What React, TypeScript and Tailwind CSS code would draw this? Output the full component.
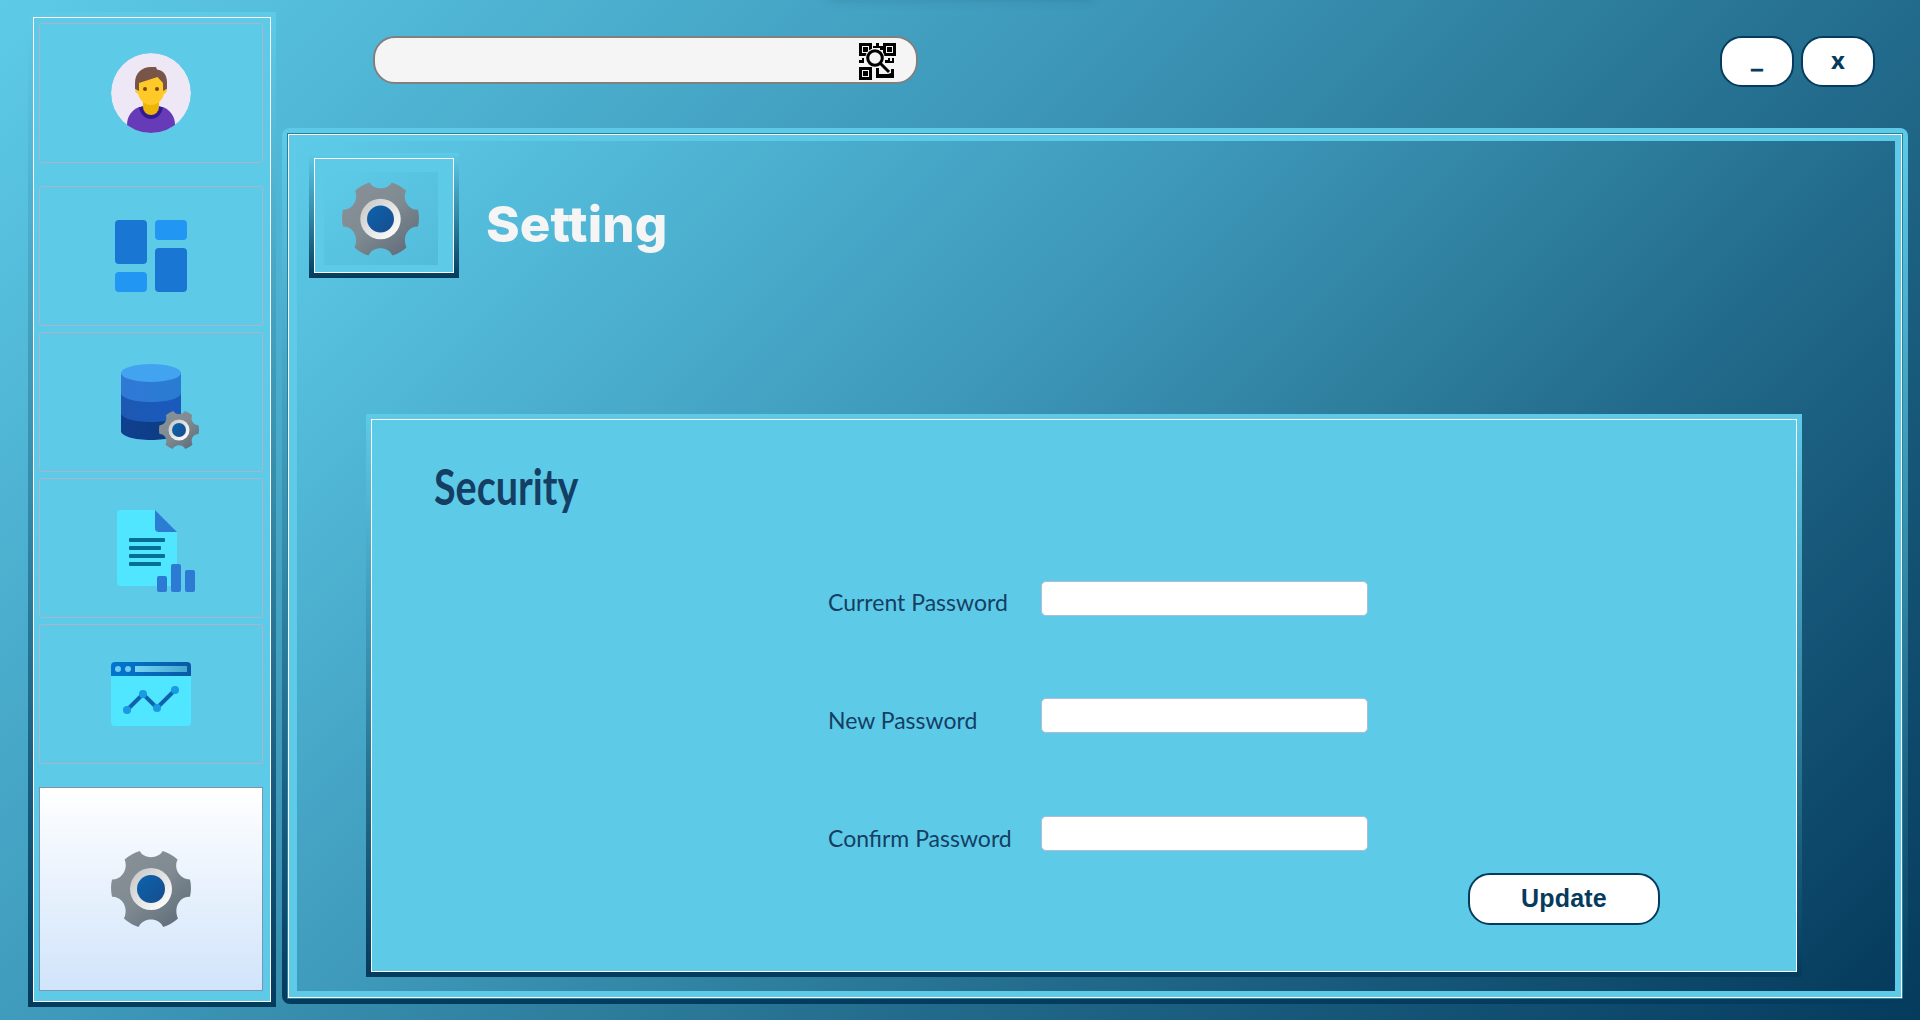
import React from "react";

function Gear({ className, id }: { className?: string; id: string }) {
  return (
    <svg viewBox="0 0 80 76" className={className}>
      <defs>
        <linearGradient id={id + "a"} x1="0.15" y1="0.1" x2="0.85" y2="0.9">
          <stop offset="0" stopColor="#889097" />
          <stop offset="0.5" stopColor="#7f8a91" />
          <stop offset="1" stopColor="#63707c" />
        </linearGradient>
        <linearGradient id={id + "b"} x1="0.15" y1="0.15" x2="0.85" y2="0.85">
          <stop offset="0" stopColor="#cdcdcd" />
          <stop offset="1" stopColor="#fafafa" />
        </linearGradient>
        <linearGradient id={id + "c"} x1="0.1" y1="0.1" x2="0.9" y2="0.9">
          <stop offset="0" stopColor="#0d61a9" />
          <stop offset="1" stopColor="#164f90" />
        </linearGradient>
      </defs>
      <path
        fill={`url(#${id}a)`}
        d="M28.8 0 C32.5 8.2 47.5 8.2 51.6 0 A40 40 0 0 1 66.6 8.6 C62 17.5 69 28.8 79 28.4 A40 40 0 0 1 79 45.8 C69 45.4 62 56 67 67.5 A40 40 0 0 1 52.2 76 C48 66 32 66 27.6 76 A40 40 0 0 1 13 67.5 C18 56.5 11 45.4 1 45.8 A40 40 0 0 1 1 28.4 C11 28.8 17.5 17.5 13.6 8.6 A40 40 0 0 1 28.8 0Z"
      />
      <circle cx="40" cy="38" r="21" fill={`url(#${id}b)`} />
      <circle cx="40" cy="38" r="14" fill={`url(#${id}c)`} />
    </svg>
  );
}

function Avatar() {
  return (
    <svg viewBox="0 0 80 80" className="size-20">
      <defs>
        <clipPath id="face"><circle cx="40" cy="40" r="40" /></clipPath>
      </defs>
      <g clipPath="url(#face)">
        <circle cx="40" cy="40" r="40" fill="#ede7f6" />
        <path fill="#673ab7" d="M16 80 V72 C16 63 21 57 28 54 H52 C59 57 64 63 64 72 V80Z" />
        <path fill="#311b92" d="M28 54.5 C34 51 46 51 52 54.5 C50 62 46 66 40 66 S30 62 28 54.5Z" />
        <path fill="#edb508" d="M32 48 H48 V54 A8 8 0 0 1 32 54Z" />
        <path fill="#ffca28" d="M28 24 L46 20 L52 28 V37 H56 C56 39 54.5 40 53 41 C51 48 46 52 40 52 S29 48 27 41 C25.5 40 24 39 24 37 H28Z" />
        <path fill="#795548" d="M24 36 V30 C24 20 31 14 40 14 H45 L46 16.5 C52 17 56 22 56 29 V36 L52 38 V30 L46.5 24 L28 30 V38Z" />
        <circle cx="34" cy="36" r="2" fill="#784719" />
        <circle cx="46" cy="36" r="2" fill="#784719" />
      </g>
    </svg>
  );
}

function Dashboard() {
  return (
    <svg viewBox="0 0 72 72" className="size-[72px]">
      <rect width="32" height="44" rx="4" fill="#1976d2" />
      <rect x="40" width="32" height="20" rx="4" fill="#2196f3" />
      <rect y="52" width="32" height="20" rx="4" fill="#2196f3" />
      <rect x="40" y="28" width="32" height="44" rx="4" fill="#1976d2" />
    </svg>
  );
}

function Database() {
  return (
    <div className="relative h-[86px] w-[78px]">
      <svg viewBox="0 0 60 76" className="h-[76px] w-[60px]">
        <defs>
          <linearGradient id="db1"><stop offset="0" stopColor="#3079d6" /><stop offset="1" stopColor="#297cd2" /></linearGradient>
          <linearGradient id="db2"><stop offset="0" stopColor="#1d59b3" /><stop offset="1" stopColor="#195abd" /></linearGradient>
          <linearGradient id="db3"><stop offset="0" stopColor="#103f8f" /><stop offset="1" stopColor="#0d3c82" /></linearGradient>
        </defs>
        <path fill="url(#db3)" d="M0 46 V67 C0 72 13 76 30 76 S60 72 60 67 V46Z" />
        <path fill="url(#db2)" d="M0 26 V49 C0 54 13 58 30 58 S60 54 60 49 V26Z" />
        <path fill="url(#db1)" d="M0 9 V29 C0 34 13 38 30 38 S60 34 60 29 V9Z" />
        <ellipse cx="30" cy="9" rx="30" ry="9" fill="#42a3f0" />
      </svg>
      <Gear id="dbg" className="absolute top-[47px] left-[38px] h-[38px] w-10" />
    </div>
  );
}

function Report() {
  return (
    <svg viewBox="0 0 78 82" className="h-[82px] w-[78px]">
      <path fill="#50e6ff" d="M4 0 H38 L60 22 V76 H4 A4 4 0 0 1 0 72 V4 A4 4 0 0 1 4 0Z" />
      <path fill="#2b7cd3" d="M38 0 L60 22 H42 A4 4 0 0 1 38 18Z" />
      <g fill="#057093">
        <rect x="12" y="28" width="36" height="4" rx="1" />
        <rect x="12" y="36" width="32" height="4" rx="1" />
        <rect x="12" y="44" width="36" height="4" rx="1" />
        <rect x="12" y="52" width="32" height="4" rx="1" />
      </g>
      <g fill="#2c7ad4">
        <rect x="40" y="66" width="10" height="16" rx="2" />
        <rect x="54" y="54" width="10" height="28" rx="2" />
        <rect x="68" y="60" width="10" height="22" rx="2" />
      </g>
    </svg>
  );
}

function Analytics() {
  return (
    <svg viewBox="0 0 80 64" className="h-16 w-20">
      <defs>
        <linearGradient id="bar"><stop offset="0" stopColor="#0077d2" /><stop offset="1" stopColor="#0b59a4" /></linearGradient>
        <linearGradient id="adr"><stop offset="0" stopColor="#76d3f2" /><stop offset="1" stopColor="#42a9cf" /></linearGradient>
      </defs>
      <path fill="#50e6ff" d="M0 14 H80 V60 A4 4 0 0 1 76 64 H4 A4 4 0 0 1 0 60Z" />
      <path fill="url(#bar)" d="M0 14 V4 A4 4 0 0 1 4 0 H76 A4 4 0 0 1 80 4 V14Z" />
      <circle cx="7" cy="7" r="3" fill="#6fcbf0" />
      <circle cx="17" cy="7" r="3" fill="#6fcbf0" />
      <rect x="24" y="4" width="52" height="6" rx="0.5" fill="url(#adr)" />
      <path d="M16 48 L32 32 L46 46 L64 28" fill="none" stroke="#0d62ab" strokeWidth="4" />
      <g fill="#199be2">
        <circle cx="16" cy="48" r="4" /><circle cx="32" cy="32" r="4" /><circle cx="46" cy="46" r="4" /><circle cx="64" cy="28" r="4" />
      </g>
    </svg>
  );
}

function QrSearch() {
  return (
    <svg viewBox="0 0 37 37" className="mt-[3px] size-[37px]">
      <g fill="none" stroke="#000" strokeWidth="3">
        <rect x="1.5" y="1.5" width="10" height="10" />
        <rect x="25.5" y="1.5" width="10" height="10" />
        <rect x="1.5" y="25.5" width="10" height="10" />
      </g>
      <path d="M4 4h5v5h-5zM28 4h5v5h-5zM4 28h5v5h-5zM14 3h3v-3h3v3h4v4h-3v-2h-7zM0 17h3v-2h2v5h-5zM26 17h3v-2h2v3h2v-3h2v5h-9zM17 25h3v6h9l3-1v-4h3v9h-18z" />
      <circle cx="16" cy="15" r="9.8" fill="#f5f5f5" />
      <path d="M21 20 L30 29" stroke="#f5f5f5" strokeWidth="5" />
      <circle cx="16" cy="15" r="7.3" fill="#f5f5f5" stroke="#000" strokeWidth="3" />
      <path d="M21 20 L30 29" stroke="#000" strokeWidth="3" />
    </svg>
  );
}

function NavTile({ children, className = "" }: { children: React.ReactNode; className?: string }) {
  return (
    <button className={"flex h-[140px] w-[224px] items-center justify-center rounded-[3px] border border-[#adb3cc] " + className}>
      {children}
    </button>
  );
}

const FADE = "bg-linear-to-b from-[#5dcbe8] via-[#3389a8] to-[#053b5d]";
const DIAG =
  "bg-[linear-gradient(135deg,#5dcbe8_0%,#3d97b9_38%,#2c7b9a_56%,#226a8b_66%,#053b5d_100%)]";

function WindowButton({ children }: { children: React.ReactNode }) {
  return (
    <button className="flex h-[51px] w-[74px] items-center justify-center rounded-[22px] border-2 border-[#053b5d] bg-white font-['Noto_Sans',sans-serif] text-2xl font-bold text-[#053b5d]">
      {children}
    </button>
  );
}

function Field({ label, className }: { label: string; className: string }) {
  return (
    <label className="flex h-[35px] items-start">
      <span className={"w-[213px] text-[23px] leading-[28px] whitespace-nowrap text-[#153e64] " + className}>{label}</span>
      <input type="password" className="h-[35px] w-[327px] rounded-[5px] border border-[#b0bcd6] bg-white px-2 outline-none" />
    </label>
  );
}

export default function App() {
  return (
    <div className={"relative flex h-[1020px] w-[1920px] overflow-hidden font-['Lato',sans-serif] " + DIAG}>
      <div className="absolute -top-3 left-[828px] h-2 w-[264px] rounded shadow-[0_0_12px_2px_rgba(20,70,90,0.3)]" />
      <aside className={"mt-3 ml-7 h-[995px] w-[248px] shrink-0 p-[5px] " + FADE}>
        <nav className="flex h-full flex-col border border-white bg-[#5dcbe8] pt-[5px] pl-[5px]">
          <NavTile><Avatar /></NavTile>
          <NavTile className="mt-[23px]"><Dashboard /></NavTile>
          <NavTile className="mt-[6px] pt-[10px] pl-[18px]"><Database /></NavTile>
          <NavTile className="mt-[6px] pt-[6px] pl-[10px]"><Report /></NavTile>
          <NavTile className="mt-[6px]"><Analytics /></NavTile>
          <button className="mt-[23px] flex h-[204px] w-[224px] items-center justify-center border border-[#7e92b4] bg-linear-to-b from-white to-[#d1e4fa]">
            <Gear id="nav" className="h-[76px] w-20" />
          </button>
        </nav>
      </aside>

      <div className="ml-[6px] w-[1626px]">
        <header className="flex h-32 justify-between">
          <div className="mt-[36.4px] ml-[91px] flex h-12 w-[545px] items-center justify-end rounded-[22px] border-2 border-[#808080] bg-[#f5f5f5] pr-5">
            <QrSearch />
          </div>
          <div className="mt-[36.4px] mr-[33px] flex gap-[7px]">
            <WindowButton>
              <span className="mb-[7px] scale-x-[1.1] [-webkit-text-stroke:1.2px_#053b5d]">_</span>
            </WindowButton>
            <WindowButton>
              <span className="mb-[3px]">x</span>
            </WindowButton>
          </div>
        </header>

        <main className={"h-[876px] rounded-lg p-[5px] " + FADE}>
          <div className="h-[866px] border border-[#2d7d9c]">
            <div className="h-[864px] border border-white bg-[#5dcbe8] pt-[6px] pr-[6px] pb-[6px] pl-[8px]">
              <section className={"h-[850px] pt-3 pl-3 " + DIAG}>
                <div className="flex">
                  <div className={"h-[125px] w-[150px] p-[5px] " + FADE}>
                    <div className="h-full border border-white bg-[#5dcbe8] pt-[13px] pl-[9px]">
                      <div className="flex h-[93px] w-[114px] items-center justify-center bg-linear-to-br from-[#5dcbe8] to-[#53bbda] pr-px">
                        <Gear id="head" className="h-[74px] w-[77px]" />
                      </div>
                    </div>
                  </div>
                  <h1 className="mt-[36px] ml-[27px] h-[70px] origin-left scale-x-[1.02] font-['Inter',sans-serif] text-[50px] leading-[70px] font-extrabold tracking-[0.1px] text-[#f5f5f5] [font-variant-ligatures:none]">
                    Setting
                  </h1>
                </div>

                <div className={"mt-[136px] ml-[57px] h-[563px] w-[1436px] p-[5px] " + FADE}>
                  <form className="flex h-full flex-col items-start border border-white bg-[#5dcbe8]" onSubmit={(e) => e.preventDefault()}>
                    <h2 className="mt-[36px] ml-[62px] h-[60px] origin-left scale-x-[0.79] text-[50px] leading-[60px] font-bold text-[#153e64]">
                      Security
                    </h2>
                    <div className="mt-[65px] ml-[456px] flex flex-col">
                      <Field label="Current Password" className="pt-[7px]" />
                      <div className="mt-[82px]"><Field label="New Password" className="pt-[8px]" /></div>
                      <div className="mt-[83px]"><Field label="Confirm Password" className="pt-[8px]" /></div>
                    </div>
                    <button className="mt-[22px] ml-[1096px] flex h-[52px] w-[192px] items-center justify-center rounded-[22px] border-2 border-[#053b5d] bg-white font-['Liberation_Sans',sans-serif] text-[25px] font-bold tracking-[0.2px] text-[#053b5d]">
                      Update
                    </button>
                  </form>
                </div>
              </section>
            </div>
          </div>
        </main>
      </div>
    </div>
  );
}
